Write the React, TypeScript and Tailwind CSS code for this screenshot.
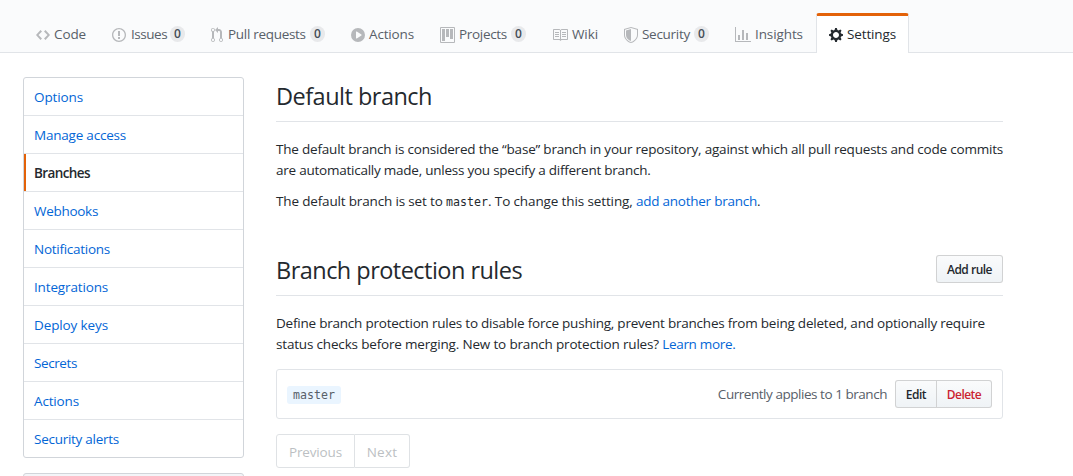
import React from "react";

type IconProps = { w: number; d: string; dark?: boolean };

function Octicon({ w, d, dark }: IconProps) {
  return (
    <svg
      width={w}
      height={16}
      viewBox={`0 0 ${w} 16`}
      className={dark ? "mt-0.5 shrink-0 fill-[#24292e]" : "mt-0.5 shrink-0 fill-[#1b1f23]/30"}
      aria-hidden="true"
    >
      <path fillRule="evenodd" d={d} />
    </svg>
  );
}

const tabs = [
  { label: "Code", box: "w-[76px]", track: "ml-1 tracking-[-0.12px]", w: 14, d: "M9.5 3L8 4.5 11.5 8 8 11.5 9.5 13 14 8 9.5 3zm-5 0L0 8l4.5 5L6 11.5 2.5 8 6 4.5 4.5 3z" },
  { label: "Issues", box: "w-[99px]", track: "ml-[5px] tracking-[-0.45px]", count: 0, w: 14, d: "M7 2.3c3.14 0 5.7 2.56 5.7 5.7s-2.56 5.7-5.7 5.7A5.71 5.71 0 011.3 8c0-3.14 2.56-5.7 5.7-5.7zM7 1C3.14 1 0 4.14 0 8s3.14 7 7 7 7-3.14 7-7-3.14-7-7-7zm1 3H6v5h2V4zm0 6H6v2h2v-2z" },
  { label: "Pull requests", box: "w-[140px]", track: "ml-[5px] tracking-[-0.3px]", count: 0, w: 12, d: "M11 11.28V5c-.03-.78-.34-1.47-.94-2.06C9.46 2.35 8.78 2.03 8 2H7V0L4 3l3 3V4h1c.27.02.48.11.69.31.21.2.3.42.31.69v6.28A1.993 1.993 0 0010 15a1.993 1.993 0 001-3.72zm-1 2.92c-.66 0-1.2-.55-1.2-1.2 0-.65.55-1.2 1.2-1.2.65 0 1.2.55 1.2 1.2 0 .65-.55 1.2-1.2 1.2zM4 3c0-1.11-.89-2-2-2a1.993 1.993 0 00-1 3.72v6.56A1.993 1.993 0 002 15a1.993 1.993 0 001-3.72V4.72c.59-.34 1-.98 1-1.72zm-.8 10c0 .66-.55 1.2-1.2 1.2-.65 0-1.2-.55-1.2-1.2 0-.65.55-1.2 1.2-1.2.65 0 1.2.55 1.2 1.2zM2 4.2C1.34 4.2.8 3.65.8 3c0-.65.55-1.2 1.2-1.2.65 0 1.2.55 1.2 1.2 0 .65-.55 1.2-1.2 1.2z" },
  { label: "Actions", box: "w-[89px]", track: "ml-1 tracking-[-0.15px]", w: 14, d: "M14 8A7 7 0 110 8a7 7 0 0114 0zm-8.223 3.482l4.599-3.066a.5.5 0 000-.832L5.777 4.518A.5.5 0 005 4.934v6.132a.5.5 0 00.777.416z" },
  { label: "Projects", box: "w-[112px]", track: "ml-1 tracking-[-0.32px]", count: 0, w: 15, d: "M10 12h3V2h-3v10zm-4-2h3V2H6v8zm-4 4h3V2H2v12zm-1 1h13V1H1v14zM14 0H1a1 1 0 00-1 1v14a1 1 0 001 1h13a1 1 0 001-1V1a1 1 0 00-1-1z" },
  { label: "Wiki", box: "w-[72px]", track: "ml-1 tracking-[-0.1px]", w: 16, d: "M3 5h4v1H3V5zm0 3h4V7H3v1zm0 2h4V9H3v1zm11-5h-4v1h4V5zm0 2h-4v1h4V7zm0 2h-4v1h4V9zm2-6v9c0 .55-.45 1-1 1H9.5l-1 1-1-1H2c-.55 0-1-.45-1-1V3c0-.55.45-1 1-1h5.5l1 1 1-1H15c.55 0 1 .45 1 1zm-8 .5L7.5 3H2v9h6V3.5zm7-.5H9.5l-.5.5V12h6V3z" },
  { label: "Security", box: "w-[111px]", track: "ml-1 tracking-[-0.28px]", count: 0, w: 14, d: "M0 2l7-2 7 2v6.02C14 12.69 8.69 16 7 16c-1.69 0-7-3.31-7-7.98V2zm1 .75L7 1l6 1.75v5.268C13 12.104 8.449 15 7 15c-1.449 0-6-2.896-6-6.982V2.75zm1 .75L7 2v12c-1.207 0-5-2.482-5-5.985V3.5z" },
  { label: "Insights", box: "w-[94px]", track: "ml-1 tracking-[-0.1px]", w: 16, d: "M16 14v1H0V0h1v14h15zM5 13H3V8h2v5zm4 0H7V3h2v10zm4 0h-2V6h2v7z" },
  { label: "Settings", box: "w-[93px]", track: "ml-1 tracking-[-0.14px]", selected: true, w: 14, d: "M14 8.77v-1.6l-1.94-.64-.45-1.09.88-1.84-1.13-1.13-1.81.91-1.09-.45-.69-1.92h-1.6l-.63 1.94-1.11.45-1.84-.88-1.13 1.13.91 1.81-.45 1.09L0 7.23v1.59l1.94.64.45 1.09-.88 1.84 1.13 1.13 1.81-.91 1.09.45.69 1.92h1.59l.63-1.94 1.11-.45 1.84.88 1.13-1.13-.92-1.81.47-1.09L14 8.75v.02zM7 11c-1.66 0-3-1.34-3-3s1.34-3 3-3 3 1.34 3 3-1.34 3-3 3z" },
];

const menu = [
  { label: "Options", track: "tracking-[-0.12px]" },
  { label: "Manage access", track: "tracking-[-0.21px]" },
  { label: "Branches", track: "tracking-[-0.6px]", selected: true },
  { label: "Webhooks", track: "tracking-[-0.29px]" },
  { label: "Notifications", track: "tracking-[-0.27px]" },
  { label: "Integrations", track: "tracking-[-0.15px]" },
  { label: "Deploy keys", track: "tracking-[-0.12px]" },
  { label: "Secrets", track: "tracking-[-0.4px]" },
  { label: "Actions", track: "tracking-[-0.15px]" },
  { label: "Security alerts", track: "tracking-[-0.27px]" },
];

function RepoNav() {
  return (
    <header className="flex h-[53px] items-end border-b border-[#e1e4e8] bg-[#fafbfc] pl-[23px]">
      <nav className="-mb-px flex">
        {tabs.map((t) => (
          <a
            key={t.label}
            className={`flex h-10 items-center whitespace-nowrap pb-px pl-[12px] ${t.box} ${
              t.selected
                ? "rounded-t-[3px] border-x border-t-[3px] border-x-[#e1e4e8] border-t-[#e36209] bg-white text-[#24292e]"
                : "border-x border-t-[3px] border-transparent text-[#586069]"
            }`}
          >
            <Octicon w={t.w} d={t.d} dark={t.selected} />
            <span className={t.track}>{t.label}</span>
            {t.count !== undefined && (
              <span className="ml-auto mr-3 flex h-4 w-[15px] items-center justify-center rounded-full bg-[#1b1f23]/8 text-[12px] font-semibold leading-none text-[#444d56]">
                {t.count}
              </span>
            )}
          </a>
        ))}
      </nav>
    </header>
  );
}

function SideMenu() {
  return (
    <aside className="w-[221px] shrink-0">
      <nav className="rounded-[3px] border border-[#d1d5da]">
        {menu.map((m) => (
          <a
            key={m.label}
            className={`flex h-[38px] items-center border-b border-[#e1e4e8] pl-[10px] pt-0.5 last:h-[37px] last:border-b-0 ${m.track} ${
              m.selected
                ? "bg-[linear-gradient(#e36209,#e36209)] bg-[length:2px_100%] bg-no-repeat font-semibold text-[#24292e]"
                : "text-[#0366d6]"
            }`}
          >
            {m.label}
          </a>
        ))}
      </nav>
      <div className="mt-[15px] h-10 rounded-t-[3px] border border-[#d1d5da] bg-[#f3f5f8]" />
    </aside>
  );
}

const button =
  "flex h-7 items-center justify-center border border-[#1b1f23]/20 bg-linear-to-b from-[#fafbfc] to-[#eff3f6] bg-clip-padding text-[12px] font-semibold text-[#24292e]";

export default function App() {
  return (
    <div className="h-[476px] overflow-hidden bg-white font-['Open_Sans','Noto_Sans',sans-serif] text-[13.5px] leading-[21px] text-[#24292e]">
      <RepoNav />
      <div className="flex gap-8 pl-[23px] pt-6">
        <SideMenu />
        <main className="w-[727px] whitespace-nowrap">
          <h2 className="h-[45px] border-b border-[#e1e4e8] text-[23.5px] leading-[38px] tracking-[-0.51px]">
            Default branch
          </h2>
          <p className="mt-[17px] tracking-[-0.2px]">
            The default branch is considered the “base” branch in your repository, against which all pull requests and code commits
            <br />
            <span className="tracking-[-0.24px]">are automatically made, unless you specify a different branch.</span>
          </p>
          <p className="mt-[10px] flex">
            <span className="w-[170px] whitespace-pre tracking-[-0.16px]">The default branch is set to </span>
            <code className="w-[42px] pt-px font-['DejaVu_Sans_Mono',monospace] text-[11.6px]">master</code>
            <span className="w-[148px] whitespace-pre tracking-[-0.12px]">. To change this setting, </span>
            <span className="tracking-[-0.25px]">
              <a className="text-[#0366d6]">add another branch</a>.
            </span>
          </p>

          <div className="mt-[42px] flex h-[41px] items-start justify-between border-b border-[#e1e4e8]">
            <h2 className="text-[23.5px] leading-[30px] tracking-[-0.53px]">Branch protection rules</h2>
            <button className={`${button} w-[67px] rounded-[3px] tracking-[-0.5px]`}>Add rule</button>
          </div>
          <p className="mt-[17px] tracking-[-0.22px]">
            Define branch protection rules to disable force pushing, prevent branches from being deleted, and optionally require
            <br />
            <span className="tracking-[-0.175px]">
              status checks before merging. New to branch protection rules?{" "}
            </span>
            <a className="tracking-[-0.33px] text-[#0366d6]">Learn more.</a>
          </p>

          <div className="mt-[14px] flex h-[50px] items-center rounded-[3px] border border-[#e1e4e8] px-[10px]">
            <code className="mt-0.5 flex h-[18px] w-[54px] items-center justify-center rounded-[3px] bg-[#eaf5ff] pt-px font-['DejaVu_Sans_Mono',monospace] text-[11.6px] text-[#586069]">
              master
            </code>
            <span className="ml-auto mr-2 tracking-[-0.46px] text-[#586069]">Currently applies to 1 branch</span>
            <button className={`${button} w-[41px] rounded-l-[3px] border-r-0 tracking-[-0.5px]`}>Edit</button>
            <button className={`${button} w-[56px] rounded-r-[3px] tracking-[-0.55px] text-[#cb2431]!`}>Delete</button>
          </div>

          <div className="mt-[15px] flex text-[#bcbfc3]">
            <span className="flex h-[34px] w-[79px] items-center justify-center rounded-l-[3px] border border-[#dfe2e5] pt-0.5 tracking-[-0.15px]">
              Previous
            </span>
            <span className="flex h-[34px] w-[55px] items-center justify-center rounded-r-[3px] border border-l-0 border-[#dfe2e5] pt-0.5 tracking-[0.25px]">
              Next
            </span>
          </div>
        </main>
      </div>
    </div>
  );
}
